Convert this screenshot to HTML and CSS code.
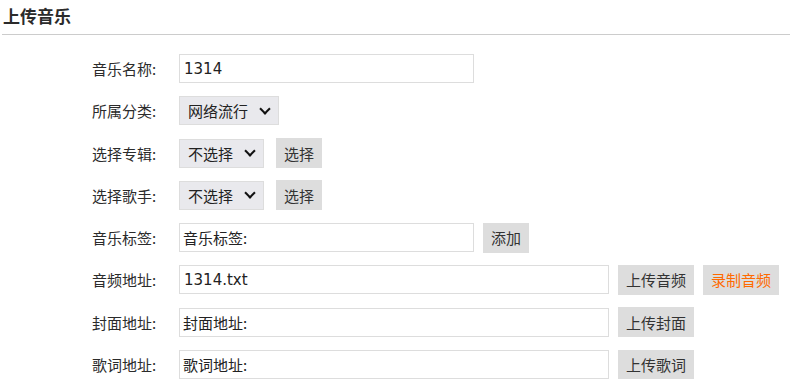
FILE: index.html
```html
<!doctype html>
<html lang="zh-CN">
<head>
	<meta charset="UTF-8">
	<title>上传音乐</title>
	<link rel="stylesheet" href="styles.css">
</head>
<body>
	<div class="page">
		<h2 class="title">上传音乐</h2>
		<form class="form">
			<div class="row">
				<label class="label">音乐名称:</label>
				<input class="text w-short" type="text" value="1314">
			</div>
			<div class="row">
				<label class="label">所属分类:</label>
				<div class="select w-cat">网络流行<span class="arrow"></span></div>
			</div>
			<div class="row">
				<label class="label">选择专辑:</label>
				<div class="select w-sel">不选择<span class="arrow"></span></div>
				<span class="btn btn-pick">选择</span>
			</div>
			<div class="row">
				<label class="label">选择歌手:</label>
				<div class="select w-sel">不选择<span class="arrow"></span></div>
				<span class="btn btn-pick">选择</span>
			</div>
			<div class="row">
				<label class="label">音乐标签:</label>
				<input class="text w-short cjk" type="text" value="音乐标签:">
				<span class="btn">添加</span>
			</div>
			<div class="row">
				<label class="label">音频地址:</label>
				<input class="text w-long" type="text" value="1314.txt">
				<span class="btn">上传音频</span>
				<span class="btn btn-rec">录制音频</span>
			</div>
			<div class="row">
				<label class="label">封面地址:</label>
				<input class="text w-long cjk" type="text" value="封面地址:">
				<span class="btn">上传封面</span>
			</div>
			<div class="row">
				<label class="label">歌词地址:</label>
				<input class="text w-long cjk" type="text" value="歌词地址:">
				<span class="btn">上传歌词</span>
			</div>
		</form>
	</div>
</body>
</html>
```

FILE: styles.css
```css
body{
	margin: 0;
	font-family: "Noto Sans CJK SC", "Noto Sans", sans-serif;
	color: #333;
	background: #fff;
}
.page{
	margin: 0 1px 0 2px;
}
.title{
	margin: 0;
	padding: 4px 1px 0;
	height: 30px;
	line-height: 24px;
	font-size: 17px;
	font-weight: bold;
	color: #2b2b2b;
	border-bottom: 1px solid #ccc;
}
.form{
	padding: 19px 0 0 90px;
	display: flex;
	flex-direction: column;
	gap: 13.3px;
}
.row{
	display: flex;
	align-items: center;
	height: 29px;
}
.label{
	width: 87px;
	font-size: 15px;
	color: #2b2b2b;
}
.text{
	box-sizing: border-box;
	height: 29px;
	margin: 0 9px 0 0;
	padding: 0 4px;
	border: 1px solid #ddd;
	outline: none;
	font-family: "DejaVu Sans", sans-serif;
	font-size: 15px;
	color: #222;
}
.text.cjk{
	font-family: "Noto Sans CJK SC", sans-serif;
	padding-left: 3px;
}
.w-short{
	width: 295px;
}
.w-long{
	width: 430px;
}
.select{
	box-sizing: border-box;
	display: flex;
	align-items: center;
	justify-content: space-between;
	height: 29px;
	padding: 0 9px 0 8px;
	margin-right: 12px;
	background: #e9e9ed;
	border: 1px solid #ddd;
	font-size: 15px;
	color: #222;
}
.w-cat{
	width: 100px;
}
.w-sel{
	width: 85px;
}
.arrow{
	width: 6px;
	height: 6px;
	border-right: 2px solid #111;
	border-bottom: 2px solid #111;
	transform: translateY(-2px) rotate(45deg);
}
.btn{
	display: flex;
	align-items: center;
	height: 30px;
	padding: 0 8px;
	margin-right: 9px;
	background: #ddd;
	font-size: 15px;
	color: #333;
}
.btn-rec{
	color: #ff6a00;
}
```
